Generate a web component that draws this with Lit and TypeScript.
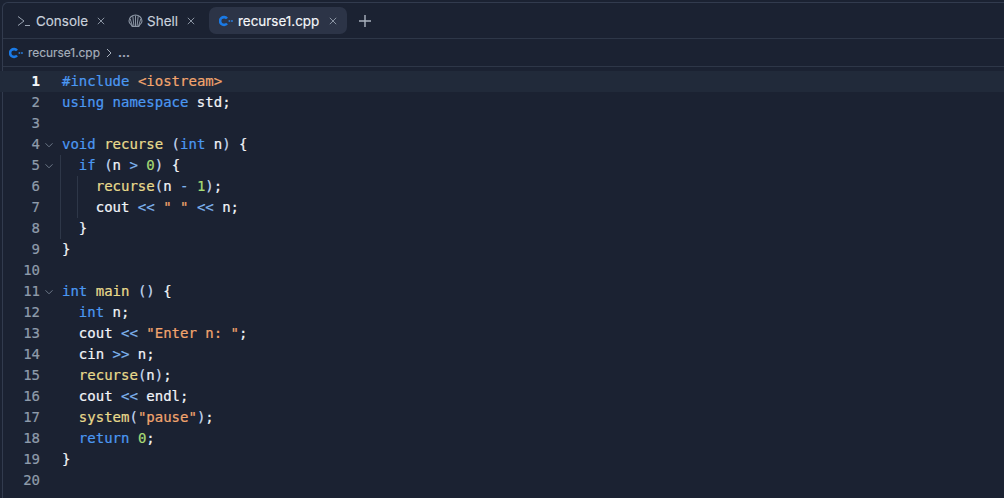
import { LitElement, html, css, svg } from "lit";
import { customElement } from "lit/decorators.js";

const T = (c: string, t: string) => html`<span class=${c}>${t}</span>`;
const LP = T("p", "(");
const RP = T("p", ")");
const LINES: any[] = [
  [T("k", "#include"), " ", T("s", "<iostream>")],
  [T("k", "using namespace"), " std;"],
  [],
  [T("k", "void"), " ", T("f", "recurse"), " ", LP, T("k", "int"), " n", RP, " {"],
  ["  ", T("k", "if"), " ", LP, "n ", T("o", ">"), " ", T("n", "0"), RP, " {"],
  ["    ", T("f", "recurse"), LP, "n ", T("o", "-"), " ", T("n", "1"), RP, ";"],
  ["    cout ", T("o", "<<"), " ", T("s", '" "'), " ", T("o", "<<"), " n;"],
  ["  }"],
  ["}"],
  [],
  [T("k", "int"), " ", T("f", "main"), " ", LP, RP, " {"],
  ["  ", T("k", "int"), " n;"],
  ["  cout ", T("o", "<<"), " ", T("s", '"Enter n: "'), ";"],
  ["  cin ", T("o", ">>"), " n;"],
  ["  ", T("f", "recurse"), LP, "n", RP, ";"],
  ["  cout ", T("o", "<<"), " endl;"],
  ["  ", T("f", "system"), LP, T("s", '"pause"'), RP, ";"],
  ["  ", T("k", "return"), " ", T("n", "0"), ";"],
  ["}"],
  [],
];
const FOLD = new Set([4, 5, 11]);

const cpp = () => html`<svg class="cpp" width="14" height="14" viewBox="0 0 14 14" fill="none">
  <path d="M8 4.500A3.900 3.900 0 1 0 8 9.500" stroke="#1a7ae6" stroke-width="2.600"/>
  <path d="M9.500 7h1.800M10.400 6.200v1.600M12 7h1.900M12.950 6.200v1.600" stroke="#2a86ee" stroke-width="1.200"/>
</svg>`;

const shell = svg`<path d="M7.500 2C4 2 1 4.600 1 8c0 1.700.9 2.900 2.200 3.700l1 1.800h6.600l1-1.800C13.100 10.900 14 9.700 14 8 14 4.600 11 2 7.500 2z" fill="none" stroke="#8b95a3" stroke-width="1.100"/>
  <path d="M7.500 2.500v11M4.800 3.200l1.200 10.300M10.200 3.200L9 13.500M2.200 5.800l2.300 7.500M12.800 5.800l-2.300 7.500" stroke="#8b95a3" stroke-width="1"/>`;

@customElement("app-root")
export class AppRoot extends LitElement {
  static styles = css`
    :host { display: block; width: 1004px; height: 498px; background: #1b2232; overflow: hidden; font-family: Inter, "Noto Sans", sans-serif; }
    .panel { box-sizing: border-box; height: 498px; margin: 2px 0 0 2px; border: 1px solid #323b4e; border-right: 0; border-bottom: 0; border-top-left-radius: 6px; display: flex; flex-direction: column; }
    .tabs { height: 36px; box-sizing: border-box; display: flex; align-items: center; padding-left: 6px; border-bottom: 1px solid #2e3748; flex: none; }
    .tab { height: 27px; display: flex; align-items: center; gap: 4px; font-size: 13.45px; color: #c9d1dc; border-radius: 7px; box-sizing: border-box; -webkit-text-stroke: 0.15px currentColor; }
    .tab.c1 { padding: 0 8px 0 7px; }
    .tab.c2 { padding: 0 14px 0 9px; margin-left: 6px; }
    .tab.active { background: #2c3447; color: #f5f7fa; padding: 0 10px; gap: 5px; }
    .x { margin-left: 5px; width: 8px; height: 8px; display: block; flex: none; }
    .plus { margin-left: 12px; display: block; }
    .crumbs { height: 28px; box-sizing: border-box; flex: none; display: flex; align-items: center; padding-left: 6px; gap: 4px; font-size: 11.9px; color: #a6afbc; border-bottom: 1px solid #2e3748; -webkit-text-stroke: 0.15px currentColor; }
    .crumbs .icon { margin-right: 1px; }
    .cpp { display: block; flex: none; }
    .crumbs .sep { display: block; margin: 0 1px; }
    .dots { font-weight: 700; }
    .code { font-family: "DejaVu Sans Mono", monospace; font-size: 14px; line-height: 21px; color: #f2f5f9; margin-left: -3px; padding-top: 4px; position: relative; -webkit-text-stroke: 0.2px currentColor; }
    .line { height: 21px; display: flex; white-space: pre; }
    .line.cur { background: #212a3a; }
    .num { width: 40px; text-align: right; color: #8f9cab; flex: none; }
    .cur .num { color: #f5f7fa; font-weight: 700; }
    .fold { width: 22px; box-sizing: border-box; padding-right: 4px; flex: none; display: flex; align-items: center; justify-content: center; }
    .k { color: #4b98f2; }
    .o { color: #7fb4ee; }
    .p { color: #c3d9f2; }
    .s { color: #f2a56e; }
    .f { color: #e8da8c; }
    .n { color: #a8dc76; }
    .guide { position: absolute; width: 1px; background: #2e3748; }
    .g1 { left: 60px; top: 88px; height: 84px; }
    .g2 { left: 77px; top: 109px; height: 42px; }
  `;

  x() {
    return html`<svg class="x" viewBox="0 0 8 8" fill="none" stroke="#8a94a2" stroke-width="1"><path d="M.8.8l6.400 6.400M7.200.8L.8 7.200"/></svg>`;
  }

  render() {
    return html`<div class="panel">
      <div class="tabs">
        <div class="tab c1">
          <svg width="16" height="16" viewBox="0 0 16 16" fill="none" stroke="#9aa4b2" stroke-width="1"><path d="M2 3.500l6 4.500-6 4.500M9 12.500h5"/></svg>
          Console ${this.x()}
        </div>
        <div class="tab c2">
          <svg width="15" height="16" viewBox="0 0 15 16">${shell}</svg>
          Shell ${this.x()}
        </div>
        <div class="tab active">${cpp()} recurse1.cpp ${this.x()}</div>
        <svg class="plus" width="12" height="12" viewBox="0 0 12 12" stroke="#aab3bf" stroke-width="1.400"><path d="M6 0v12M0 6h12"/></svg>
      </div>
      <div class="crumbs">
        <span class="icon">${cpp()}</span> <span>recurse1.cpp</span>
        <svg class="sep" width="8" height="10" viewBox="0 0 8 10" fill="none" stroke="#a6afbc" stroke-width="1"><path d="M2 1l4 4-4 4"/></svg>
        <span class="dots">...</span>
      </div>
      <div class="code">
        <div class="guide g1"></div><div class="guide g2"></div>
        ${LINES.map((l, i) => html`<div class="line ${i === 0 ? "cur" : ""}">
          <div class="num">${i + 1}</div>
          <div class="fold">${FOLD.has(i + 1) ? html`<svg width="8" height="8" viewBox="0 0 8 8" fill="none" stroke="#6d7888"><path d="M.5 2.300L4 5.800l3.500-3.500"/></svg>` : ""}</div>
          <div>${l}</div>
        </div>`)}
      </div>
    </div>`;
  }
}
